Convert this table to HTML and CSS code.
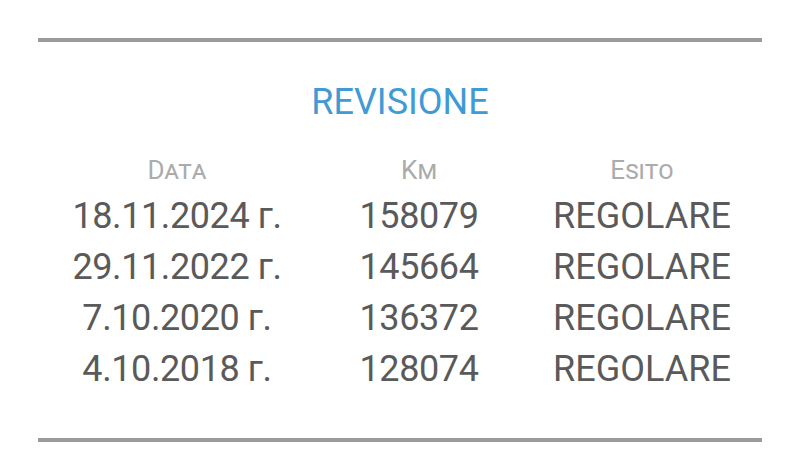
FILE: index.html
```html
<!DOCTYPE html>
<html lang="it">
<head>
<meta charset="utf-8">
<link rel="stylesheet" href="styles.css">
</head>
<body>
<section class="card">
  <div class="rule"></div>
  <h2 class="title">REVISIONE</h2>
  <div class="table">
    <div class="head">Data</div>
    <div class="head">Km</div>
    <div class="head">Esito</div>

    <div class="cell num">18.11.2024 г.</div>
    <div class="cell num">158079</div>
    <div class="cell">REGOLARE</div>

    <div class="cell num">29.11.2022 г.</div>
    <div class="cell num">145664</div>
    <div class="cell">REGOLARE</div>

    <div class="cell num">7.10.2020 г.</div>
    <div class="cell num">136372</div>
    <div class="cell">REGOLARE</div>

    <div class="cell num">4.10.2018 г.</div>
    <div class="cell num">128074</div>
    <div class="cell">REGOLARE</div>
  </div>
  <div class="rule rule-bottom"></div>
</section>
</body>
</html>
```

FILE: styles.css
```css
html, body {
  margin: 0;
  padding: 0;
  background: #ffffff;
}

body {
  font-family: Roboto, "Liberation Sans", sans-serif;
  width: 800px;
  height: 471px;
  overflow: hidden;
}

.card {
  padding: 38px 38px 0 38px;
  display: flex;
  flex-direction: column;
}

.rule {
  height: 4px;
  background: #9b9b9b;
}

.title {
  margin: 40px 0 0 0;
  font-size: 36px;
  line-height: 40px;
  font-weight: 400;
  color: #3f9ad5;
  text-align: center;
}

.table {
  margin: 33px 0 0 22px;
  display: grid;
  grid-template-columns: 234px 250px 196px;
}

.head {
  font-size: 26px;
  line-height: 30px;
  font-variant: small-caps;
  color: #ababab;
  text-align: center;
  margin-bottom: 6px;
}

.cell {
  font-size: 36px;
  line-height: 51px;
  color: #5a5a5a;
  text-align: center;
  white-space: nowrap;
}

.num {
  letter-spacing: -0.4px;
}

.rule-bottom {
  margin-top: 43px;
}
```
